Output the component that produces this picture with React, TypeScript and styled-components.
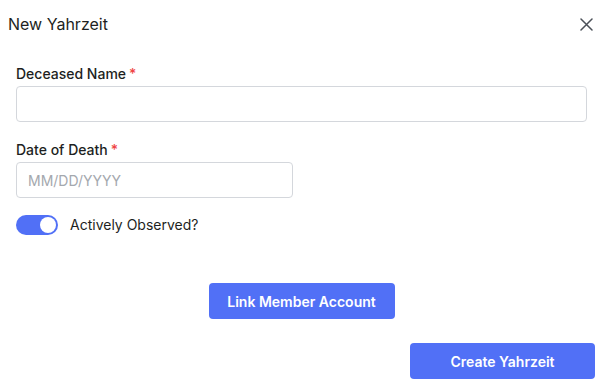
import React, { useState } from "react";
import styled, { createGlobalStyle } from "styled-components";

const GlobalStyle = createGlobalStyle`
  body {
    margin: 0;
    background: #ffffff;
    font-family: Inter, "Noto Sans", sans-serif;
    color: #1f2328;
  }
`;

const Dialog = styled.div`
  width: 610px;
  height: 388px;
  display: flex;
  flex-direction: column;
  box-sizing: border-box;
`;

const Header = styled.div`
  display: flex;
  align-items: center;
  justify-content: space-between;
  height: 48px;
  padding: 0 14px 0 8px;
`;

const Title = styled.h2`
  margin: 0;
  font-size: 16px;
  font-weight: 400;
  line-height: 24px;
  color: #1d1f22;
`;

const CloseButton = styled.button`
  display: flex;
  align-items: center;
  justify-content: center;
  width: 20px;
  height: 20px;
  padding: 0;
  border: none;
  background: none;
  color: #4b5058;
  cursor: pointer;
`;

const Form = styled.div`
  display: flex;
  flex-direction: column;
  padding: 16px 23px 0 16px;
`;

const Field = styled.div<{ $width?: number }>`
  display: flex;
  flex-direction: column;
  gap: 2px;
  width: ${(p) => (p.$width ? `${p.$width}px` : "100%")};
  margin-bottom: 18px;
`;

const Label = styled.label`
  font-size: 14px;
  font-weight: 500;
  line-height: 20px;
  color: #1d1f22;
`;

const Required = styled.span`
  color: #ef4444;
  margin-left: 3px;
`;

const TextInput = styled.input`
  box-sizing: border-box;
  width: 100%;
  height: 36px;
  padding: 0 11px;
  border: 1px solid #d4d7dc;
  border-radius: 4px;
  font-family: Inter, "Noto Sans", sans-serif;
  font-size: 14px;
  color: #1d1f22;
  outline: none;

  &::placeholder {
    color: #a4a8ae;
  }
`;

const ToggleRow = styled.div`
  display: flex;
  align-items: center;
  gap: 12px;
  margin-top: -1px;
`;

const Track = styled.button<{ $on: boolean }>`
  position: relative;
  width: 42px;
  height: 20px;
  padding: 0;
  border: none;
  border-radius: 10px;
  background: ${(p) => (p.$on ? "#5170f6" : "#d4d7dc")};
  cursor: pointer;
`;

const Knob = styled.span<{ $on: boolean }>`
  position: absolute;
  top: 2px;
  left: ${(p) => (p.$on ? "24px" : "2px")};
  width: 16px;
  height: 16px;
  border-radius: 50%;
  background: #ffffff;
`;

const ToggleText = styled.span`
  font-size: 14px;
  line-height: 20px;
  color: #1d1f22;
`;

const CenterRow = styled.div`
  display: flex;
  justify-content: center;
  margin-top: 48px;
`;

const Footer = styled.div`
  display: flex;
  justify-content: flex-end;
  padding: 24px 15px 0 0;
`;

const PrimaryButton = styled.button<{ $width: number }>`
  width: ${(p) => p.$width}px;
  height: 36px;
  border: none;
  border-radius: 4px;
  background: #5170f6;
  color: #ffffff;
  font-family: Inter, "Noto Sans", sans-serif;
  font-size: 14px;
  font-weight: 600;
  cursor: pointer;
`;

function CloseIcon() {
  return (
    <svg width="13" height="13" viewBox="0 0 13 13" fill="none">
      <path d="M1 1L12 12M12 1L1 12" stroke="currentColor" strokeWidth="1.5" strokeLinecap="round" />
    </svg>
  );
}

export default function App() {
  const [observed, setObserved] = useState(true);

  return (
    <>
      <GlobalStyle />
      <Dialog>
        <Header>
          <Title>New Yahrzeit</Title>
          <CloseButton aria-label="Close">
            <CloseIcon />
          </CloseButton>
        </Header>

        <Form>
          <Field>
            <Label>
              Deceased Name<Required>*</Required>
            </Label>
            <TextInput type="text" />
          </Field>

          <Field $width={277}>
            <Label>
              Date of Death<Required>*</Required>
            </Label>
            <TextInput type="text" placeholder="MM/DD/YYYY" />
          </Field>

          <ToggleRow>
            <Track $on={observed} onClick={() => setObserved(!observed)}>
              <Knob $on={observed} />
            </Track>
            <ToggleText>Actively Observed?</ToggleText>
          </ToggleRow>

          <CenterRow>
            <PrimaryButton $width={186}>Link Member Account</PrimaryButton>
          </CenterRow>
        </Form>

        <Footer>
          <PrimaryButton $width={185}>Create Yahrzeit</PrimaryButton>
        </Footer>
      </Dialog>
    </>
  );
}
